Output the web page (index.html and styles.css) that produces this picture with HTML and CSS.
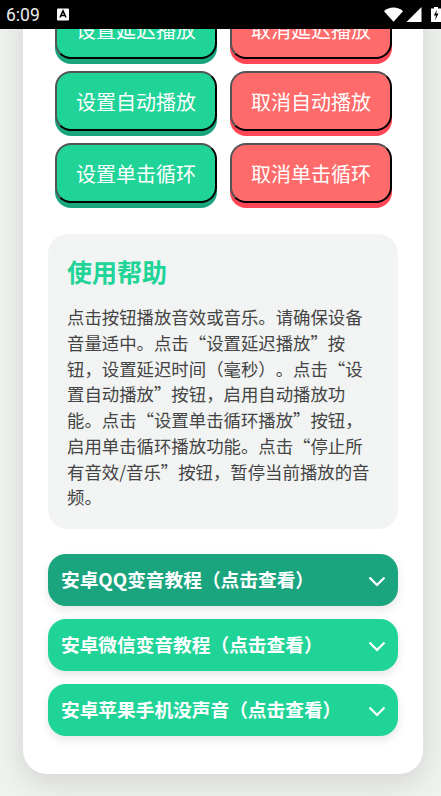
FILE: index.html
```html
<!DOCTYPE html>
<html lang="zh-CN">
<head>
    <meta charset="UTF-8">
    <meta name="viewport" content="width=device-width, initial-scale=1.0">
    <title>音效播放</title>
    <link rel="stylesheet" href="styles.css">
</head>
<body>
    <div class="status-bar">
        <span class="time">6:09</span>
        <svg class="icon-a" viewBox="0 0 12 12"><rect width="12" height="12" rx="1" fill="#fff"/><path d="M3 9 L6 2.5 L9 9 M4.2 7 H7.8" fill="none" stroke="#000" stroke-width="1.6"/></svg>
        <span class="status-right">
            <svg class="icon-wifi" viewBox="0 0 20 15"><path d="M0 4 C5 -1 15 -1 20 4 L10 15 Z" fill="#fff"/></svg>
            <svg class="icon-signal" viewBox="0 0 15 15"><path d="M15 0 V15 H0 Z" fill="#fff"/></svg>
            <svg class="icon-battery" viewBox="0 0 10 15"><path d="M3 0 H7 V1.500 H10 V15 H0 V1.500 H3 Z" fill="#fff"/><path d="M6 2.500 L2.800 8.500 H5 L4 13.500 L7.500 6.500 H5.200 Z" fill="#000"/></svg>
        </span>
    </div>

    <div class="card">
        <div class="btn-grid">
            <button class="btn btn-set">设置延迟播放</button>
            <button class="btn btn-cancel">取消延迟播放</button>
            <button class="btn btn-set">设置自动播放</button>
            <button class="btn btn-cancel">取消自动播放</button>
            <button class="btn btn-set">设置单击循环</button>
            <button class="btn btn-cancel">取消单击循环</button>
        </div>

        <div class="help">
            <h2>使用帮助</h2>
            <p>点击按钮播放音效或音乐。请确保设备音量适中。点击“设置延迟播放”按钮，设置延迟时间（毫秒）。点击“设置自动播放”按钮，启用自动播放功能。点击“设置单击循环播放”按钮，启用单击循环播放功能。点击“停止所有音效/音乐”按钮，暂停当前播放的音频。</p>
        </div>

        <div class="tutorials">
            <div class="tutorial active">
                <span class="tutorial-title">安卓QQ变音教程（点击查看）</span>
                <svg class="chevron" viewBox="0 0 18 11"><path d="M1.500 1.500 L9 9 L16.500 1.500"/></svg>
            </div>
            <div class="tutorial">
                <span class="tutorial-title">安卓微信变音教程（点击查看）</span>
                <svg class="chevron" viewBox="0 0 18 11"><path d="M1.500 1.500 L9 9 L16.500 1.500"/></svg>
            </div>
            <div class="tutorial">
                <span class="tutorial-title">安卓苹果手机没声音（点击查看）</span>
                <svg class="chevron" viewBox="0 0 18 11"><path d="M1.500 1.500 L9 9 L16.500 1.500"/></svg>
            </div>
        </div>
    </div>
</body>
</html>
```

FILE: styles.css
```css
* {
    box-sizing: border-box;
}

html, body {
    height: 796px;
    overflow: hidden;
}

body {
    margin: 0;
    padding: 0 18px 22px 23px;
    font-family: "Noto Sans CJK SC", "Noto Sans", sans-serif;
    text-spacing-trim: space-all;
    background-color: #f0f2ef;
    display: flex;
    flex-direction: column;
    justify-content: flex-end;
}

/* sits over the scrolled page */
.status-bar {
    position: absolute;
    top: 0;
    left: 0;
    width: 441px;
    height: 29px;
    background-color: #000;
    color: #eee;
    display: flex;
    align-items: center;
    padding-left: 6px;
    overflow: hidden;
    z-index: 2;
}

.time {
    font-family: Roboto, sans-serif;
    font-size: 17.5px;
    width: 51px;
}

.icon-a {
    width: 12px;
    height: 13px;
}

.status-right {
    position: absolute;
    left: 384px;
    top: 7px;
    display: flex;
    align-items: flex-start;
}

.icon-wifi {
    width: 19px;
    height: 15px;
    margin-right: 3px;
}

.icon-signal {
    width: 16px;
    height: 15px;
    margin-right: 9px;
}

.icon-battery {
    width: 10px;
    height: 15px;
    flex: none;
}

.card {
    width: 400px;
    flex: none;
    background-color: #fff;
    border-radius: 0 0 24px 24px;
    padding: 0 25px 38px;
    box-shadow: 0 8px 30px rgba(0, 0, 0, 0.13);
}

.btn-grid {
    display: grid;
    grid-template-columns: 162px 162px;
    column-gap: 13px;
    row-gap: 12px;
    padding: 0 7px;
    margin-bottom: 31px;
}

.btn {
    height: 60px;
    border-radius: 16px;
    border: 2px outset #000;
    color: #fff;
    font-family: inherit;
    font-size: 20px;
    padding: 0;
}

.btn-set {
    background-color: #20d497;
    box-shadow: 0 5px 0 #1ba57f;
}

.btn-cancel {
    background-color: #ff6b6b;
    box-shadow: 0 5px 0 #ff4757;
}

.help {
    background-color: #f2f4f3;
    border-radius: 20px;
    padding: 18px 22px 19px 19px;
    margin-bottom: 25px;
}

.help h2 {
    margin: 0 0 14px;
    color: #20d497;
    font-size: 25px;
    line-height: 38px;
    font-weight: 700;
}

.help p {
    margin: 0;
    color: #444;
    font-size: 17.4px;
    line-height: 25.7px;
}

.tutorials {
    display: flex;
    flex-direction: column;
    gap: 13px;
}

.tutorial {
    height: 52px;
    border-radius: 18px;
    background-color: #20d497;
    color: #fff;
    font-size: 18.7px;
    font-weight: 700;
    display: flex;
    align-items: center;
    justify-content: space-between;
    padding: 0 12px 0 13px;
    box-shadow: 0 4px 10px rgba(0, 0, 0, 0.1);
}

.tutorial.active {
    background-color: #1ba57f;
}

.tutorial-title {
    padding-bottom: 3px;
}

.chevron {
    width: 18px;
    height: 11px;
    margin-top: 2px;
    fill: none;
    stroke: #fff;
    stroke-width: 2.2;
}
```
